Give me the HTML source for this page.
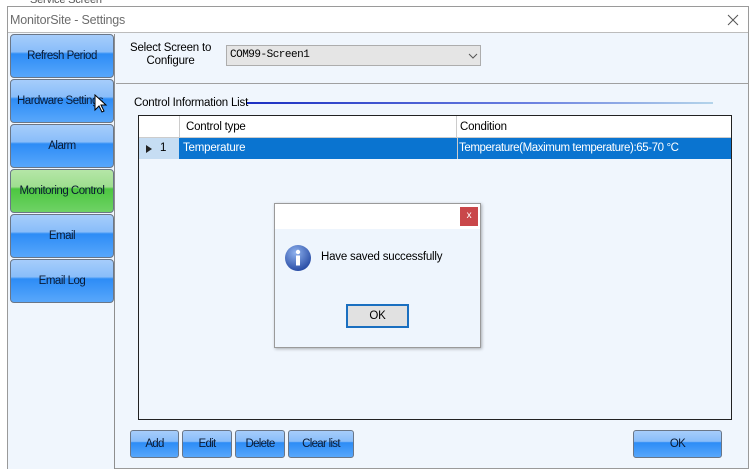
<!DOCTYPE html><html><head><style>
*{box-sizing:border-box;margin:0;padding:0}
body{width:752px;height:474px;background:#fff;font-family:"Liberation Sans",sans-serif;font-size:11.5px;letter-spacing:-0.2px;position:relative;overflow:hidden;color:#000}
.a{position:absolute}
.win{left:7px;top:6px;width:742px;height:463px;border:1px solid #9a9a9a;background:#f0f6fd}
.title{left:0;top:0;width:740px;height:26px;background:#fff;border-bottom:1px solid #bcbcbc;color:#6d6d6d;font-size:12.5px;padding:6px 0 0 2px}
.nav{left:2px;width:104px;height:44px;border:1px solid #6a7687;border-radius:4px;background:linear-gradient(#a6cdfb 0%,#89bdf9 40%,#2d8cf6 45%,#58a7fb 100%);text-align:center;line-height:42px;font-size:11.5px;letter-spacing:-0.5px;color:#0a1a33}
.green{background:linear-gradient(#b5e6a7 0%,#9fde90 40%,#4cc640 45%,#6fd266 100%)}
.btn{height:28px;border:1px solid #6a7687;border-radius:3px;background:linear-gradient(#a6cdfb 0%,#89bdf9 40%,#2d8cf6 45%,#58a7fb 100%);text-align:center;line-height:26px;font-size:11.5px;color:#0a1a33;letter-spacing:-.7px}
</style></head><body>
<div class="a" style="left:30px;top:-6px;color:#555;font-size:11px">Service Screen</div>
<div class="a win">
<div class="a title">MonitorSite - Settings</div>
<svg class="a" style="left:719px;top:7px" width="12" height="12"><path d="M1 1L11 11M11 1L1 11" stroke="#555" stroke-width="1"/></svg>
<div class="a" style="left:0;top:27px;width:107px;height:435px;border-right:1px solid #8e8e8e;background:#f0f6fd"></div>
<div class="a nav" style="top:27px">Refresh Period</div>
<div class="a nav" style="top:72px;white-space:nowrap;overflow:hidden;text-align:left;padding-left:6px">Hardware Settings</div>
<div class="a nav" style="top:117px">Alarm</div>
<div class="a nav green" style="top:162px">Monitoring Control</div>
<div class="a nav" style="top:207px">Email</div>
<div class="a nav" style="top:252px">Email Log</div>
<svg class="a" style="left:86px;top:87px" width="14" height="20"><path d="M1 1 L1 16 L5 12 L8 18 L10 17 L7 11 L12 11 Z" fill="#fff" stroke="#000" stroke-width="1"/></svg>
<div class="a" style="left:122px;top:35px;text-align:center;line-height:13px">Select Screen to<br>Configure</div>
<div class="a" style="left:218px;top:38px;width:255px;height:21px;border:1px solid #adadad;background:#e5e5e5;font-family:'Liberation Mono',monospace;font-size:11px;letter-spacing:-0.5px;padding:3px 0 0 3px">COM99-Screen1</div>
<svg class="a" style="left:460px;top:46px" width="10" height="6"><path d="M1 1 L5 5 L9 1" fill="none" stroke="#555"/></svg>
<div class="a" style="left:108px;top:76px;width:632px;height:1px;background:#a0a0a0"></div>
<div class="a" style="left:126px;top:90px">Control Information List</div>
<div class="a" style="left:239px;top:95px;width:466px;height:2px;background:linear-gradient(90deg,#1b2fc2,#6a7fe0 60%,#b4d4ea)"></div>
<div class="a" style="left:130px;top:108px;width:594px;height:305px;border:1px solid #222;background:#f0f6fd">
<div class="a" style="left:0;top:0;width:592px;height:22px;background:#fff;border-bottom:1px solid #ccc"></div>
<div class="a" style="left:40px;top:0;width:1px;height:22px;background:#ccc"></div>
<div class="a" style="left:317px;top:0;width:1px;height:43px;background:#ccc"></div>
<div class="a" style="left:47px;top:5px">Control type</div>
<div class="a" style="left:321px;top:5px">Condition</div>
<div class="a" style="left:0;top:22px;width:40px;height:21px;background:#c6ddf3"></div>
<svg class="a" style="left:7px;top:29px" width="6" height="8"><path d="M0 0L6 4L0 8Z" fill="#222"/></svg>
<div class="a" style="left:21px;top:26px">1</div>
<div class="a" style="left:40px;top:22px;width:552px;height:21px;background:#0a74d0;color:#fff;padding:4px 0 0 4px">Temperature</div>
<div class="a" style="left:318px;top:22px;width:1px;height:21px;background:#ccc"></div>
<div class="a" style="left:320px;top:26px;color:#fff;letter-spacing:-0.4px">Temperature(Maximum temperature):65-70 °C</div>
</div>
<div class="a btn" style="left:122px;top:423px;width:49px">Add</div>
<div class="a btn" style="left:174px;top:423px;width:50px">Edit</div>
<div class="a btn" style="left:227px;top:423px;width:50px">Delete</div>
<div class="a btn" style="left:280px;top:423px;width:66px">Clear list</div>
<div class="a btn" style="left:625px;top:423px;width:89px">OK</div>
</div>
<div class="a" style="left:274px;top:203px;width:207px;height:145px;border:1px solid #9a9a9a;background:#eef5fd;box-shadow:1px 1px 3px rgba(0,0,0,.3)">
<div class="a" style="left:0;top:0;width:205px;height:25px;background:#fff"></div>
<div class="a" style="left:185px;top:3px;width:18px;height:19px;background:#c9474a;color:#fff;font-size:10px;text-align:center;line-height:18px">x</div>
<svg class="a" style="left:9px;top:40px" width="28" height="28"><defs><radialGradient id="g" cx=".4" cy=".3" r=".8"><stop offset="0" stop-color="#8fb2ee"/><stop offset="1" stop-color="#1b3f9b"/></radialGradient></defs><circle cx="14" cy="14" r="13" fill="url(#g)"/><circle cx="14" cy="8" r="2.2" fill="#fff"/><rect x="12" y="11.5" width="4" height="10" fill="#fff"/></svg>
<div class="a" style="left:46px;top:47px">Have saved successfully</div>
<div class="a" style="left:71px;top:100px;width:63px;height:24px;border:2px solid #1a6fc0;background:#e1e1e1;text-align:center;line-height:20px">OK</div>
</div>
</body></html>
